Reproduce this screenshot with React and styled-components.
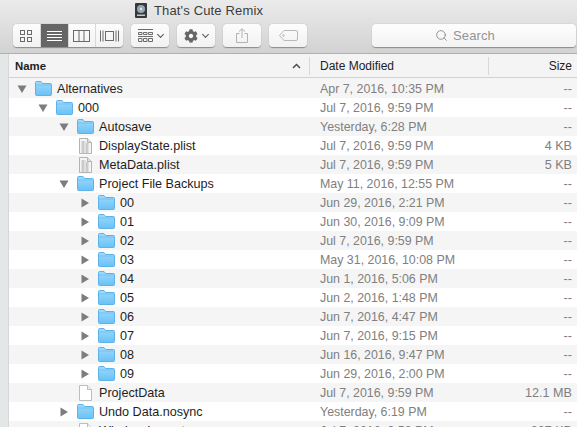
import React from 'react'
import styled, { createGlobalStyle } from 'styled-components'
import { Search } from 'lucide-react'
import { FaCog } from 'react-icons/fa'

const GlobalStyle = createGlobalStyle`
    html, body {
        margin: 0;
        height: 100%;
        overflow: hidden;
    }
    body {
        font-family: "Liberation Sans", Arial, sans-serif;
        font-size: 13px;
    }
`;

const rows = [
    { name: 'Alternatives', depth: 0, arrow: 'open', icon: 'folder', date: 'Apr 7, 2016, 10:35 PM', size: '--' },
    { name: '000', depth: 1, arrow: 'open', icon: 'folder', date: 'Jul 7, 2016, 9:59 PM', size: '--' },
    { name: 'Autosave', depth: 2, arrow: 'open', icon: 'folder', date: 'Yesterday, 6:28 PM', size: '--' },
    { name: 'DisplayState.plist', depth: 2, icon: 'plist', date: 'Jul 7, 2016, 9:59 PM', size: '4 KB' },
    { name: 'MetaData.plist', depth: 2, icon: 'plist', date: 'Jul 7, 2016, 9:59 PM', size: '5 KB' },
    { name: 'Project File Backups', depth: 2, arrow: 'open', icon: 'folder', date: 'May 11, 2016, 12:55 PM', size: '--' },
    { name: '00', depth: 3, arrow: 'closed', icon: 'folder', date: 'Jun 29, 2016, 2:21 PM', size: '--' },
    { name: '01', depth: 3, arrow: 'closed', icon: 'folder', date: 'Jun 30, 2016, 9:09 PM', size: '--' },
    { name: '02', depth: 3, arrow: 'closed', icon: 'folder', date: 'Jul 7, 2016, 9:59 PM', size: '--' },
    { name: '03', depth: 3, arrow: 'closed', icon: 'folder', date: 'May 31, 2016, 10:08 PM', size: '--' },
    { name: '04', depth: 3, arrow: 'closed', icon: 'folder', date: 'Jun 1, 2016, 5:06 PM', size: '--' },
    { name: '05', depth: 3, arrow: 'closed', icon: 'folder', date: 'Jun 2, 2016, 1:48 PM', size: '--' },
    { name: '06', depth: 3, arrow: 'closed', icon: 'folder', date: 'Jun 7, 2016, 4:47 PM', size: '--' },
    { name: '07', depth: 3, arrow: 'closed', icon: 'folder', date: 'Jun 7, 2016, 9:15 PM', size: '--' },
    { name: '08', depth: 3, arrow: 'closed', icon: 'folder', date: 'Jun 16, 2016, 9:47 PM', size: '--' },
    { name: '09', depth: 3, arrow: 'closed', icon: 'folder', date: 'Jun 29, 2016, 2:00 PM', size: '--' },
    { name: 'ProjectData', depth: 2, icon: 'doc', date: 'Jul 7, 2016, 9:59 PM', size: '12.1 MB' },
    { name: 'Undo Data.nosync', depth: 2, arrow: 'closed', icon: 'folder', date: 'Yesterday, 6:19 PM', size: '--' },
    { name: 'Window Layout', depth: 2, icon: 'doc', date: 'Jul 7, 2016, 9:59 PM', size: '207 KB' },
];

function FolderIcon() {
    return (
        <svg width="17" height="15" viewBox="0 0 17 15">
            <defs>
                <linearGradient id="folderFill" x1="0" y1="0" x2="0" y2="1">
                    <stop offset="0" stopColor="#9edbfc" />
                    <stop offset="1" stopColor="#69c1f6" />
                </linearGradient>
            </defs>
            <path d="M1.5 14.5 a1 1 0 0 1 -1 -1 V1.5 a1 1 0 0 1 1 -1 H6 l1.5 2 H15.5 a1 1 0 0 1 1 1 V13.5 a1 1 0 0 1 -1 1 Z" fill="url(#folderFill)" stroke="#5cb3ea" />
            <path d="M1 4 H16" stroke="#5cb3ea" strokeWidth="0.7" opacity="0.7" />
        </svg>
    )
}

function PlistIcon() {
    return (
        <svg width="13" height="16" viewBox="0 0 13 16">
            <path d="M0.5 0.5 H8.5 L12.5 4.5 V15.5 H0.5 Z" fill="#f4f4f4" stroke="#b4b4b4" />
            <path d="M8.5 0.5 V4.5 H12.5" fill="#dedede" stroke="#b4b4b4" />
            <path d="M2.5 4 H7 M2.5 6 H10.5 M2.5 8 H10.5 M2.5 10 H10.5 M2.5 12 H10.5 M2.5 14 H10.5" stroke="#a2a2a2" strokeDasharray="3 1" />
        </svg>
    )
}

function DocIcon() {
    return (
        <svg width="13" height="16" viewBox="0 0 13 16">
            <path d="M0.5 0.5 H8.5 L12.5 4.5 V15.5 H0.5 Z" fill="#fff" stroke="#bdbdbd" />
            <path d="M8.5 0.5 V4.5 H12.5" fill="#f0f0f0" stroke="#bdbdbd" />
        </svg>
    )
}

function Triangle({ kind }) {
    if (!kind) return null
    return (
        <svg width="10" height="10" viewBox="0 0 10 10">
            {kind === 'open'
                ? <path d="M0.5 1.5 H9.5 L5 9 Z" fill="#7d7d7d" />
                : <path d="M1.5 0.5 V9.5 L9 5 Z" fill="#7d7d7d" />}
        </svg>
    )
}

function App() {
    return (
        <Window>
            <GlobalStyle />
            <TopBar>
                <TitleRow>
                    <svg width="12" height="15" viewBox="0 0 12 15">
                        <rect width="12" height="15" rx="1" fill="#33393d" />
                        <circle cx="6" cy="6" r="4" fill="#9aa6ad" />
                        <circle cx="6" cy="6" r="1.2" fill="#e4e8ea" />
                        <rect x="2" y="11.5" width="8" height="1.5" fill="#c4c8ca" />
                    </svg>
                    <Title>That's Cute Remix</Title>
                </TitleRow>
                <Toolbar>
                    <Segmented>
                        <Segment>
                            <svg width="14" height="14" viewBox="0 0 14 14" fill="none" stroke="#6a6a6a">
                                <rect x="1.5" y="1.5" width="4" height="4" />
                                <rect x="8.5" y="1.5" width="4" height="4" />
                                <rect x="1.5" y="8.5" width="4" height="4" />
                                <rect x="8.5" y="8.5" width="4" height="4" />
                            </svg>
                        </Segment>
                        <Segment $active>
                            <svg width="15" height="12" viewBox="0 0 15 12" stroke="#fff">
                                <path d="M0 1.5 H15 M0 4.5 H15 M0 7.5 H15 M0 10.5 H15" />
                            </svg>
                        </Segment>
                        <Segment>
                            <svg width="17" height="12" viewBox="0 0 17 12" fill="none" stroke="#6a6a6a">
                                <rect x="0.5" y="0.5" width="16" height="11" />
                                <path d="M6 0.5 V11.5 M11 0.5 V11.5" />
                            </svg>
                        </Segment>
                        <Segment>
                            <svg width="19" height="12" viewBox="0 0 19 12" fill="none" stroke="#6a6a6a">
                                <rect x="5.5" y="1.5" width="8" height="9" />
                                <path d="M0.5 0.5 V11.5 M3 0.5 V11.5 M16 0.5 V11.5 M18.5 0.5 V11.5" />
                            </svg>
                        </Segment>
                    </Segmented>
                    <ToolButton>
                        <svg width="15" height="13" viewBox="0 0 15 13" fill="none" stroke="#6a6a6a">
                            <path d="M0 0.5 H15" />
                            <path d="M0.5 3.5 H4 V5.5 H0.5 Z M5.5 3.5 H9 V5.5 H5.5 Z M10.5 3.5 H14.5 V5.5 H10.5 Z" />
                            <path d="M0.5 9.5 H4 V12.5 H0.5 Z M5.5 9.5 H9 V12.5 H5.5 Z M10.5 9.5 H14.5 V12.5 H10.5 Z" />
                            <path d="M0 7.5 H15" />
                        </svg>
                        <Caret />
                    </ToolButton>
                    <ToolButton>
                        <FaCog size={14} color="#666" />
                        <Caret />
                    </ToolButton>
                    <ToolButton>
                        <svg width="12" height="15" viewBox="0 0 12 15" fill="none" stroke="#b2b2b2">
                            <path d="M3.5 5.5 H0.5 V14.5 H11.5 V5.5 H8.5" />
                            <path d="M6 10 V1 M3 3.5 L6 0.7 L9 3.5" />
                        </svg>
                    </ToolButton>
                    <ToolButton>
                        <svg width="19" height="11" viewBox="0 0 19 11" fill="none" stroke="#b8b8b8">
                            <path d="M5 0.5 H17 a1.5 1.5 0 0 1 1.5 1.5 V9 a1.5 1.5 0 0 1 -1.5 1.5 H5 L0.5 5.5 Z" />
                            <circle cx="4.5" cy="5.5" r="0.8" />
                        </svg>
                    </ToolButton>
                    <SearchBox>
                        <Search size={13} strokeWidth={1.3} color="#6f6f6f" />
                        <span>Search</span>
                    </SearchBox>
                </Toolbar>
            </TopBar>
            <Body>
                <SideStrip />
                <ListPane>
                    <HeaderRow>
                        <NameHead>
                            Name
                            <svg width="9" height="6" viewBox="0 0 9 6" fill="none" stroke="#444" strokeWidth="1.4">
                                <path d="M1 5 L4.5 1.5 L8 5" />
                            </svg>
                        </NameHead>
                        <DateHead>Date Modified</DateHead>
                        <SizeHead>Size</SizeHead>
                    </HeaderRow>
                    <List>
                        {rows.map((row) => (
                            <Row key={row.name + row.date}>
                                <NameCell $depth={row.depth}>
                                    <ArrowSlot><Triangle kind={row.arrow} /></ArrowSlot>
                                    <IconSlot>
                                        {row.icon === 'folder' && <FolderIcon />}
                                        {row.icon === 'plist' && <PlistIcon />}
                                        {row.icon === 'doc' && <DocIcon />}
                                    </IconSlot>
                                    <FileName>{row.name}</FileName>
                                </NameCell>
                                <DateCell>{row.date}</DateCell>
                                <SizeCell>{row.size}</SizeCell>
                            </Row>
                        ))}
                    </List>
                </ListPane>
            </Body>
        </Window>
    )
}

export default App


const Window = styled.div`
    width: 577px;
    height: 427px;
    overflow: hidden;
    background: #fff;
    display: flex;
    flex-direction: column;
`;

const TopBar = styled.div`
    height: 53px;
    flex: none;
    background: linear-gradient(#ecebec, #d3d2d3);
    border-bottom: 1px solid #b1b0b1;
`;

const TitleRow = styled.div`
    height: 20px;
    padding: 1px 0 0 135px;
    box-sizing: border-box;
    display: flex;
    align-items: center;
    gap: 7px;
`;

const Title = styled.span`
    color: #3c3c3c;
    letter-spacing: 0.15px;
`;

const Toolbar = styled.div`
    display: flex;
    align-items: center;
    gap: 8px;
    padding: 4px 1px 0 13px;
`;

const Segmented = styled.div`
    display: flex;
    width: 110px;
    height: 23px;
    border-radius: 4px;
    overflow: hidden;
    background: linear-gradient(#fdfdfd, #f1f1f1);
    box-shadow: 0 0.5px 1px rgba(0, 0, 0, 0.35);
`;

const Segment = styled.div`
    flex: 1;
    display: flex;
    align-items: center;
    justify-content: center;
    background: ${(p) => (p.$active ? '#666' : 'transparent')};
    & + & {
        border-left: 1px solid #d8d8d8;
    }
`;

const ToolButton = styled.div`
    width: 38px;
    height: 23px;
    border-radius: 4px;
    display: flex;
    align-items: center;
    justify-content: center;
    gap: 5px;
    background: linear-gradient(#fdfdfd, #f1f1f1);
    box-shadow: 0 0.5px 1px rgba(0, 0, 0, 0.35);
`;

const Caret = styled.span`
    width: 4px;
    height: 4px;
    margin-top: -3px;
    border-right: 1.3px solid #555;
    border-bottom: 1.3px solid #555;
    transform: rotate(45deg);
`;

const SearchBox = styled.div`
    margin-left: auto;
    width: 204px;
    height: 23px;
    box-sizing: border-box;
    padding-right: 18px;
    border-radius: 4px;
    display: flex;
    align-items: center;
    justify-content: center;
    gap: 5px;
    color: #949494;
    font-size: 13px;
    letter-spacing: 0.1px;
    background: linear-gradient(#fdfdfd, #f3f3f3);
    box-shadow: 0 0.5px 1px rgba(0, 0, 0, 0.35);
`;

const Body = styled.div`
    flex: 1;
    display: flex;
    min-height: 0;
`;

const SideStrip = styled.div`
    width: 8px;
    flex: none;
    background: #e4e7e7;
    border-right: 1px solid #d6d8d8;
`;

const ListPane = styled.div`
    flex: 1;
    min-width: 0;
`;

const HeaderRow = styled.div`
    height: 23px;
    display: grid;
    grid-template-columns: 301px 179px 1fr;
    align-items: center;
    background: #f5f4f5;
    border-bottom: 1px solid #d2d2d2;
    font-size: 12px;
    color: #222;
`;

const NameHead = styled.div`
    height: 18px;
    padding: 0 8px 0 6px;
    display: flex;
    align-items: center;
    justify-content: space-between;
    font-size: 11.4px;
    font-weight: bold;
    border-right: 1px solid #d8d8d8;
`;

const DateHead = styled.div`
    height: 18px;
    line-height: 18px;
    padding-left: 10px;
    border-right: 1px solid #d8d8d8;
`;

const SizeHead = styled.div`
    text-align: right;
    padding-right: 5px;
`;

const List = styled.div`
    padding-top: 1px;
    background: #f5f5f5;
`;

const Row = styled.div`
    height: 19px;
    display: grid;
    grid-template-columns: 301px 179px 1fr;
    align-items: center;
    background: #fff;
    &:nth-child(odd) {
        background: #f5f5f5;
    }
`;

const NameCell = styled.div`
    display: flex;
    align-items: center;
    padding-left: ${(p) => 8 + p.$depth * 21}px;
`;

const ArrowSlot = styled.div`
    width: 18px;
    flex: none;
    display: flex;
    align-items: center;
`;

const IconSlot = styled.div`
    width: 17px;
    height: 16px;
    flex: none;
    display: flex;
    align-items: center;
    justify-content: center;
`;

const FileName = styled.span`
    margin-left: 5px;
    color: #1e1e1e;
    font-size: 12.6px;
    white-space: nowrap;
`;

const DateCell = styled.div`
    padding-left: 10px;
    color: #808080;
    font-size: 12.4px;
    white-space: nowrap;
`;

const SizeCell = styled.div`
    text-align: right;
    padding-right: 5px;
    color: #808080;
    font-size: 12.6px;
    white-space: nowrap;
`;
